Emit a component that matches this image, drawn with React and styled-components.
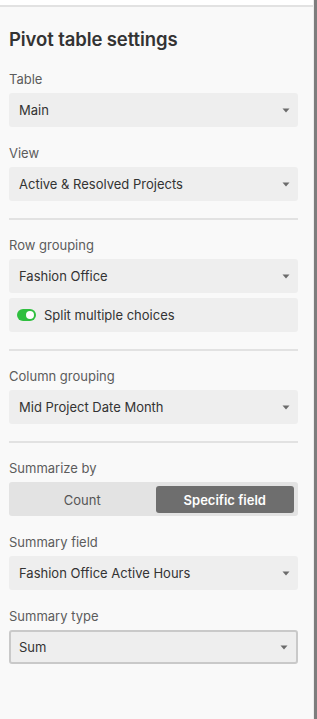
import React from "react";
import styled, { createGlobalStyle } from "styled-components";

const GlobalStyle = createGlobalStyle`
  html, body {
    margin: 0;
    padding: 0;
    background: #ffffff;
  }
  body {
    font-family: Inter, "Noto Sans", sans-serif;
    -webkit-font-smoothing: antialiased;
  }
`;

const Caret = () => (
  <svg width="8" height="5" viewBox="0 0 8 5">
    <path d="M0.5 0.5 H7.5 L4 4.5 Z" fill="#6b6b6b" />
  </svg>
);

const Select = ({ value, bordered }) => (
  <SelectBox $bordered={bordered}>
    <span>{value}</span>
    <Caret />
  </SelectBox>
);

const Field = ({ label, children }) => (
  <FieldWrap>
    <Label>{label}</Label>
    {children}
  </FieldWrap>
);

const App = () => {
  return (
    <>
      <GlobalStyle />
      <Page>
        <Panel>
          <TopStrip />
          <Content>
            <Title>Pivot table settings</Title>
            <Section>
              <Field label="Table">
                <Select value="Main" />
              </Field>
              <Field label="View">
                <Select value="Active & Resolved Projects" />
              </Field>
            </Section>
            <Divider />
            <Section>
              <Field label="Row grouping">
                <Select value="Fashion Office" />
                <ToggleRow>
                  <Toggle $on />
                  <span>Split multiple choices</span>
                </ToggleRow>
              </Field>
            </Section>
            <Divider />
            <Section>
              <Field label="Column grouping">
                <Select value="Mid Project Date Month" />
              </Field>
            </Section>
            <Divider />
            <Section>
              <Field label="Summarize by">
                <Segmented>
                  <Segment>Count</Segment>
                  <Segment $active>Specific field</Segment>
                </Segmented>
              </Field>
              <Field label="Summary field">
                <Select value="Fashion Office Active Hours" />
              </Field>
              <Field label="Summary type">
                <Select value="Sum" bordered />
              </Field>
            </Section>
          </Content>
        </Panel>
        <Edge />
      </Page>
    </>
  );
};

const Page = styled.div`
  display: flex;
  width: 317px;
  height: 719px;
  overflow: hidden;
`;

const Panel = styled.div`
  flex: 1;
  display: flex;
  flex-direction: column;
  background: #f9f9f9;
  border-right: 1px solid #ececec;
`;

const TopStrip = styled.div`
  height: 5px;
  background: #ffffff;
  border-bottom: 2px solid #e2e2e2;
`;

const Edge = styled.div`
  width: 3px;
  background: #7d7d7d;
`;

const Content = styled.div`
  padding: 0 15px 0 9px;
  display: flex;
  flex-direction: column;
`;

const Title = styled.h1`
  margin: 20px 0 3px;
  font-size: 18.5px;
  line-height: 24px;
  font-weight: 600;
  color: #333333;
  letter-spacing: -0.1px;
`;

const Section = styled.div`
  display: flex;
  flex-direction: column;
  gap: 1px;
  padding-bottom: 17px;
`;

const FieldWrap = styled.div`
  display: flex;
  flex-direction: column;
  gap: 5px;
`;

const Label = styled.div`
  margin: 17px 0 1px;
  font-size: 13px;
  line-height: 16px;
  color: #5c5c5c;
`;

const SelectBox = styled.div`
  box-sizing: border-box;
  height: 34px;
  display: flex;
  align-items: center;
  justify-content: space-between;
  padding: 0 8px 0 ${(p) => (p.$bordered ? 8 : 10)}px;
  background: #eeeeee;
  border-radius: 3px;
  border: ${(p) => (p.$bordered ? "2px solid #c9c9c9" : "none")};
  font-size: 13px;
  color: #333333;
`;

const ToggleRow = styled.div`
  box-sizing: border-box;
  height: 34px;
  display: flex;
  align-items: center;
  gap: 8px;
  padding: 0 8px;
  background: #eeeeee;
  border-radius: 3px;
  font-size: 13px;
  color: #333333;
`;

const Toggle = styled.span`
  position: relative;
  width: 19px;
  height: 12px;
  border-radius: 6px;
  background: ${(p) => (p.$on ? "#2fbf3f" : "#bbbbbb")};

  &::after {
    content: "";
    position: absolute;
    top: 2px;
    left: ${(p) => (p.$on ? "9px" : "2px")};
    width: 8px;
    height: 8px;
    border-radius: 50%;
    background: #ffffff;
  }
`;

const Segmented = styled.div`
  box-sizing: border-box;
  height: 34px;
  display: grid;
  grid-template-columns: 1fr 1fr;
  padding: 4px 4px 3px 4px;
  gap: 4px;
  background: #e3e3e3;
  border-radius: 3px;
`;

const Segment = styled.div`
  display: flex;
  align-items: center;
  justify-content: center;
  border-radius: 3px;
  font-size: 13px;
  font-weight: ${(p) => (p.$active ? 600 : 400)};
  color: ${(p) => (p.$active ? "#ffffff" : "#555555")};
  background: ${(p) => (p.$active ? "#6e6e6e" : "transparent")};
`;

const Divider = styled.div`
  height: 2px;
  background: #e2e2e2;
`;

export default App;
